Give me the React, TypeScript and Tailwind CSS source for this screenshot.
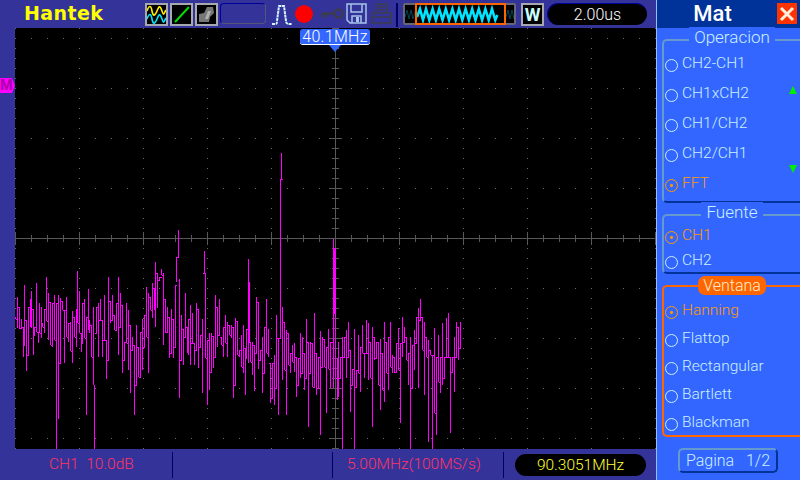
import { ReactNode } from 'react';

// traces read off as [x, top, bottom] in 3x crop coordinates
const LEFT_TRACE = [
  [45,262,268],[51,200,295],[57,232,298],[63,268,295],[69,290,380],[72,165,345],[78,270,422],[84,232,375],[90,207,290],[94,183,290],[99,237,375],[103,290,315],[109,160,305],[114,305,338],[118,220,310],[123,232,325],[127,280,290],[133,237,310],[139,142,272],[145,190,330],[151,215,345],[157,220,350],[163,196,330],[169,220,656],[175,196,567],[181,205,400],[187,212,240],[193,240,400],[199,202,320],[205,280,335],[211,275,362],[217,243,400],[223,260,320],[229,237,350],[232,124,280],[236,182,310],[242,310,365],[247,220,340],[253,208,325],[259,262,555],[263,178,300],[268,270,310],[274,285,380],[280,232,465],[283,465,656],[289,232,310],[295,220,380],[301,208,270],[305,270,380],[313,195,330],[319,330,447],[325,142,390],[331,212,280],[335,195,270],[343,255,300],[349,220,300],[355,142,375],[361,190,290],[367,225,430],[373,335,390],[379,220,340],[385,240,420],[391,285,490],[397,322,360],[401,345,555],[407,285,465],[413,350,440],[419,305,445],[425,268,420],[431,255,350],[437,170,320],[443,190,430],[449,200,240],[455,160,265],[461,175,240],[465,95,290],[471,130,235],[477,140,150],[483,118,135],[489,130,345],[495,208,310],[501,232,305],[507,262,385],[513,237,370],[519,268,385],[525,165,350],[529,82,155],[533,0,80],[537,148,505],[543,255,390],[549,298,405],[555,190,320],[561,292,370],[565,268,375],[571,225,405],[577,248,340],[583,340,405],[589,220,360],[595,238,415],[601,315,350],[607,268,490],[611,64,130],[615,130,385],[621,330,525],[627,310,480],[633,310,425],[639,318,415],[645,195,380],[651,230,350],[657,208,315],[663,320,345],[669,290,380],[675,255,340],[681,275,380],[687,285,315],[693,285,325],[699,290,505],[705,265,465],[711,272,375],[717,360,380],
];

const RIGHT_TRACE = [
  [3,585,680],[9,555,700],[15,625,765],[19,568,655],[25,358,670],[28,425,605],[31,605,665],[35,605,705],[41,615,752],[47,472,640],[53,485,688],[59,630,660],[65,590,758],[71,562,700],[77,478,640],[85,568,650],[89,670,790],[95,670,775],[101,645,795],[109,525,745],[115,595,825],[119,118,595],[123,40,118],[127,500,720],[131,545,690],[137,570,825],[143,580,675],[149,640,700],[155,615,665],[161,610,695],[167,650,770],[173,655,735],[179,580,715],[185,590,700],[191,640,750],[197,538,715],[205,605,860],[211,605,700],[217,610,740],[223,520,740],[229,640,765],[235,650,745],[241,572,885],[247,590,680],[253,598,680],[259,620,820],[265,568,688],[271,605,745],[279,298,745],[282,325,520],[285,325,715],[291,655,780],[295,605,770],[301,650,715],[307,590,930],[313,590,650],[319,570,715],[325,545,650],[331,630,815],[337,688,735],[343,568,930],[349,690,740],[355,585,700],[361,620,755],[367,555,640],[373,640,715],[379,540,640],[385,550,720],[391,605,715],[397,562,860],[403,590,660],[409,605,655],[415,605,735],[421,598,810],[427,640,750],[433,545,785],[439,605,700],[445,590,750],[451,545,680],[457,645,700],[463,650,700],[469,610,695],[475,565,690],[479,610,850],[485,530,650],[491,560,605],[497,590,660],[505,640,735],[511,590,930],[517,615,745],[523,570,690],[529,530,610],[535,505,745],[539,478,540],[545,530,630],[551,545,765],[557,590,650],[563,600,905],[569,630,645],[577,645,930],[583,565,820],[589,650,885],[595,585,725],[601,650,760],[607,548,735],[613,650,715],[619,535,650],[625,520,650],[631,650,880],[637,650,695],[643,590,755],[649,545,650],[655,560,660],[661,545,625],
];

const columns = [
  ...LEFT_TRACE.map(([x, t, b]) => [Math.round(x / 3), Math.round(230 + t / 3), Math.round(230 + b / 3)]),
  ...RIGHT_TRACE.map(([x, t, b]) => [Math.round(240 + x / 3), Math.round(140 + t / 3), Math.round(140 + b / 3)]),
];

const tracePath = columns
  .map(([x, t, b], i) => {
    const next = columns[i + 1];
    if (!next) return `M${x + 0.5} ${t}V${b}`;
    // join neighbours inside the span they share
    const y = i % 2 ? Math.max(t, next[1]) : Math.min(b, next[2]);
    return `M${x + 0.5} ${t}V${b}M${x + 0.5} ${y + 0.5}H${next[0] + 0.5}`;
  })
  .join('');

function Graticule() {
  const rows = [38, 88, 138, 188, 288, 338, 388, 438];
  const cols = [15, 79, 143, 207, 271, 399, 463, 527, 591, 655];
  const dots: string[] = [];
  rows.forEach(y => {
    for (let x = 15; x <= 655; x += 16) dots.push(`M${x} ${y}h1v1h-1z`);
  });
  cols.forEach(x => {
    for (let y = 28; y <= 448; y += 10) dots.push(`M${x} ${y}h1v1h-1z`);
  });
  const ticks: string[] = [];
  for (let x = 15; x <= 655; x += 16) {
    const len = (x - 15) % 64 === 0 ? 6 : 3;
    ticks.push(`M${x + 0.5} ${238 - len}V${239 + len}`);
  }
  for (let y = 28; y <= 448; y += 10) {
    const len = (y - 38) % 50 === 0 ? 6 : 3;
    ticks.push(`M${335 - len} ${y + 0.5}H${336 + len}`);
  }
  return (
    <>
      <path d={dots.join('')} fill="#686868" shapeRendering="crispEdges" />
      <path d={`M15 238.5H655M335.5 28V449${ticks.join('')}`} stroke="#585858" fill="none" shapeRendering="crispEdges" />
    </>
  );
}

function IconBox({ children }: { children: ReactNode }) {
  return (
    <div className="w-[23px] h-[23px] bg-black border-2 border-[#a8a8b0] shrink-0">
      <svg viewBox="0 0 19 19" className="w-[19px] h-[19px] block">{children}</svg>
    </div>
  );
}

function Radio({ label, selected }: { label: string; selected?: boolean }) {
  return (
    <div className={`flex items-center h-full gap-[4px] ${selected ? 'text-[#ff9900]' : 'text-[#ccf0ff]'}`}>
      <svg viewBox="0 0 13 13" className="w-[13px] h-[13px] mt-[5px] shrink-0" fill="none" stroke="currentColor">
        <circle cx="6.5" cy="6.5" r="6" />
        {selected && <circle cx="6.5" cy="6.5" r="1.2" fill="currentColor" />}
      </svg>
      <span className="mt-[2px]">{label}</span>
    </div>
  );
}

function Group({ title, height, className, children }: { title: string; height: string; className: string; children: ReactNode }) {
  return (
    <div className={`relative ml-[5px] border-l-2 border-t-2 border-b-2 border-l-[#6699cc] border-t-[#6699cc] border-b-[#003399] rounded-l-[5px] ${height} ${className}`}>
      <span className="absolute left-0 right-0 top-[-14px] flex justify-center">
        <span className="bg-[#3366ff] px-[5px] text-[#ccf0ff] text-[17px] leading-[20px]">{title}</span>
      </span>
      {children}
    </div>
  );
}

export default function App() {
  return (
    <div className="w-[800px] h-[480px] flex bg-[#333399] overflow-hidden text-[15.5px] font-light font-['Roboto','Liberation_Sans',sans-serif]">
      {/* Scope side */}
      <div className="w-[656px] flex flex-col">
        {/* Toolbar */}
        <div className="h-[28px] flex items-start pt-[3px] pl-[24px]">
          <span className="w-[121px] text-[#ffff00] text-[19px] leading-[21px] font-bold tracking-[0.4px] font-['DejaVu_Sans',sans-serif]">Hantek</span>
          <div className="flex gap-[2px]">
            <IconBox>
              <path d="M0 6c2-6 4-6 5 0s3 5 5 0 3-6 5 0 2 2 4-1" fill="none" stroke="#ffee00" strokeWidth="1.6" />
              <path d="M0 14c2-6 4-6 5 0s3 5 5 0 3-6 5 0 2 2 4-1" fill="none" stroke="#00e5ff" strokeWidth="1.6" />
            </IconBox>
            <IconBox>
              <path d="M3 17L17 2" stroke="#00dd00" strokeWidth="2" />
            </IconBox>
            <IconBox>
              <path d="M2 17V9l5-1 3-6h6l1 6-4 4-1 5z" fill="#777777" />
              <path d="M8 14l3-8h3l-3 8z" fill="#b0b0b0" />
            </IconBox>
          </div>
          <div className="w-[46px] h-[21px] ml-[2px] rounded-[4px] border border-t-[#000099] border-l-[#000099] border-r-[#555577] border-b-[#555577]" />
          <svg viewBox="0 0 22 22" className="w-[22px] h-[22px] ml-[5px] shrink-0" fill="none" stroke="#d4f4ff" strokeWidth="2">
            <path d="M1 21h3c2 0 2-1 2-3l2-15h5l2 15c0 2 1 3 3 3h3" strokeDasharray="3 0.6" />
          </svg>
          <div className="w-[18px] h-[18px] ml-[2px] mt-[2px] rounded-full bg-[#ff0000] shrink-0" />
          <svg viewBox="0 0 24 14" className="w-[24px] h-[14px] ml-[7px] mt-[4px] shrink-0" fill="none" stroke="#3c3c50" strokeWidth="2.5">
            <circle cx="18.5" cy="6.5" r="4" />
            <path d="M14 6.5H1M3 7v4M7 7v3" />
          </svg>
          <svg viewBox="0 0 21 21" className="w-[21px] h-[21px] ml-[2px] shrink-0" fill="none" stroke="#a8c4e8" strokeWidth="1.5">
            <path d="M1 1h19v19H4l-3-3z" />
            <path d="M5 1v8h11V1M6 20v-7h9v7" />
            <path d="M10 14h3v5h-3z" fill="#a8c4e8" stroke="none" />
          </svg>
          <svg viewBox="0 0 21 21" className="w-[21px] h-[21px] ml-[4px] shrink-0" fill="none" stroke="#3c3c50" strokeWidth="1.5">
            <path d="M5 10V1h11v9M7 4h7M7 7h7" />
            <path d="M1 10h19v10H1zM1 14h19" />
          </svg>
          <div className="w-[2px] h-[24px] ml-[4px] bg-[#000066] shrink-0" />
          <div className="w-[113px] h-[22px] ml-[5px] flex bg-black border-2 border-[#666677] rounded-[2px] shrink-0">
            <svg viewBox="0 0 10 18" className="w-[10px] h-[18px]" fill="none" stroke="#004455"><path d="M0 12l2-7 2 9 2-9 2 9 2-7" /></svg>
            <div className="w-[91px] h-[22px] mt-[-2px] border-[2px] border-[#ff6600] shrink-0">
              <svg viewBox="0 0 87 18" className="w-[87px] h-[18px] block" fill="none" stroke="#00e5ff" strokeWidth="2.6">
                <path d="M0 12l3-8 3 11 3-11 3.300 11 3.300-11 3.300 11 3.300-11 3.300 11 3.300-11 3.300 11 3.300-11 3.300 11 3.300-11 3.300 11 3.300-11 3.300 11 3.300-11 3.300 11 3.300-11 3.300 11 3.300-11 3.300 11 3.300-11 3.300 11 2-5" />
              </svg>
            </div>
            <svg viewBox="0 0 8 18" className="w-[8px] h-[18px]" fill="none" stroke="#004455"><path d="M0 12l2-7 2 9 2-9 2 9" /></svg>
          </div>
          <div className="w-[23px] h-[23px] ml-[5px] bg-black border-2 border-[#a8a8b0] flex items-center justify-center text-[#ccffff] text-[18px] font-bold shrink-0">W</div>
          <div className="w-[100px] h-[22px] ml-[3px] rounded-full bg-black text-white text-[16px] leading-[22px] text-center shrink-0 border-l border-t border-[#000099]">2.00us</div>
        </div>

        {/* Plot */}
        <div className="flex-1 flex">
          <div className="w-[15px] relative">
            <div className="absolute left-0 top-[50px] w-[15px] h-[15px] bg-[#ff00ff] text-[#aa00aa] text-[14px] leading-[15px] font-bold text-center pr-[2px] [clip-path:polygon(0_0,80%_0,100%_50%,80%_100%,0_100%)]">M</div>
          </div>
          <div className="relative w-[641px] bg-black">
            <svg viewBox="15 28 641 421" className="block w-[641px] h-[421px]">
              <Graticule />
              <path d={tracePath} stroke="#ff00ff" fill="none" shapeRendering="crispEdges" />
            </svg>
            <div className="absolute left-[285px] top-[1px] w-[70px] h-[16px] bg-[#3366ff] rounded-[3px] border-b border-white text-white text-[16px] leading-[15px] text-center tracking-[0.3px]">40.1MHz</div>
            <div className="absolute left-[314px] top-[17px] w-0 h-0 border-l-[6px] border-r-[6px] border-t-[7px] border-l-transparent border-r-transparent border-t-[#3366ff]" />
          </div>
        </div>

        {/* Status bar */}
        <div className="h-[31px] flex items-center text-[#ff3366]">
          <span className="w-[172px] pl-[49px] whitespace-pre shrink-0">CH1  10.0dB</span>
          <div className="w-px h-[26px] bg-[#000066] shrink-0" />
          <div className="w-[159px] shrink-0" />
          <div className="w-px h-[26px] bg-[#000066] shrink-0" />
          <span className="w-[170px] pl-[14px] shrink-0 whitespace-pre">5.00MHz(100MS/s)</span>
          <div className="w-px h-[26px] bg-[#000066] shrink-0" />
          <div className="w-[131px] h-[22px] ml-[11px] rounded-full bg-black text-[#ffff33] leading-[22px] text-center shrink-0">90.3051MHz</div>
        </div>
      </div>

      {/* Menu panel */}
      <div className="w-[144px] flex flex-col bg-[#3366ff] border-l border-[#99bbff]">
        <div className="h-[28px] flex items-center bg-[#003399] relative">
          <span className="w-full pr-[32px] text-center text-white text-[22px] font-medium leading-[28px]">Mat</span>
          <div className="absolute right-[3px] top-[3px] w-[20px] h-[21px] bg-[#ff3300] flex items-center justify-center">
            <svg viewBox="0 0 16 16" className="w-[16px] h-[16px]" stroke="#ffeedd" strokeWidth="3"><path d="M2 2l12 12M14 2L2 14" /></svg>
          </div>
        </div>

        <Group title="Operacion" height="h-[164px]" className="mt-[11px] pt-[7px] pl-[1px]">
          {[
            ['CH2-CH1', false],
            ['CH1xCH2', false],
            ['CH1/CH2', false],
            ['CH2/CH1', false],
            ['FFT', true],
          ].map(([label, sel]) => (
            <div key={label as string} className="h-[30px]">
              <Radio label={label as string} selected={sel as boolean} />
            </div>
          ))}
          <div className="absolute right-[3px] top-[45px] w-0 h-0 border-l-[4px] border-r-[4px] border-b-[8px] border-l-transparent border-r-transparent border-b-[#00ee00]" />
          <div className="absolute right-[3px] top-[124px] w-0 h-0 border-l-[4px] border-r-[4px] border-t-[8px] border-l-transparent border-r-transparent border-t-[#00ee00]" />
        </Group>

        <Group title="Fuente" height="h-[60px]" className="mt-[11px] pt-[6px] pl-[1px]">
          <div className="h-[25px]"><Radio label="CH1" selected /></div>
          <div className="h-[25px]"><Radio label="CH2" /></div>
        </Group>

        <div className="relative ml-[5px] mt-[11px] h-[152px] pt-[9px] pl-[1px] border-l-2 border-t-2 border-b-2 border-[#ff6600] rounded-l-[5px]">
          <span className="absolute left-0 right-0 top-[-11px] flex justify-center">
            <span className="w-[68px] h-[19px] bg-[#ff6600] rounded-[7px] text-[#ffeecc] text-[16px] leading-[19px] text-center">Ventana</span>
          </span>
          {['Hanning', 'Flattop', 'Rectangular', 'Bartlett', 'Blackman'].map((w, i) => (
            <div key={w} className="h-[28px]"><Radio label={w} selected={i === 0} /></div>
          ))}
        </div>

        <div className="ml-[21px] mt-[11px] w-[100px] h-[25px] rounded-[5px] border-2 border-t-[#6699cc] border-l-[#6699cc] border-r-[#003399] border-b-[#003399] text-[#ccf0ff] text-center text-[16px] leading-[21px] whitespace-pre">Pagina   1/2</div>
      </div>
    </div>
  );
}
